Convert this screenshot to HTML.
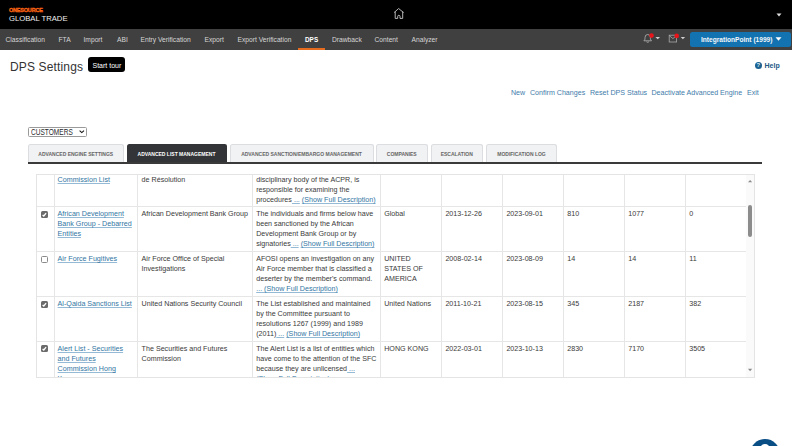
<!DOCTYPE html>
<html><head><meta charset="utf-8">
<style>
*{margin:0;padding:0;box-sizing:border-box}
html,body{width:792px;height:446px;overflow:hidden;background:#fff;font-family:"Liberation Sans",sans-serif;position:relative}
.a{position:absolute;white-space:nowrap}
#hdr{position:absolute;left:0;top:0;width:792px;height:29px;background:#000}
#nav{position:absolute;left:0;top:29px;width:792px;height:21px;background:#404040}
.nv{position:absolute;top:36px;font-size:6.7px;line-height:8px;color:#d6d6d6;white-space:nowrap}
.lk{position:absolute;top:88.7px;font-size:7.1px;line-height:9px;color:#3f7cab;white-space:nowrap}
.tab{position:absolute;top:144px;height:18.2px;background:#f1f2f4;border:1px solid #dcdde0;border-bottom:none;border-radius:2.5px 2.5px 0 0;font-weight:bold;font-size:5px;color:#666;text-align:center;line-height:18.2px;white-space:nowrap}
#tbl{position:absolute;left:36px;top:175px;width:718px;height:202px;overflow:hidden;background:#fff}
#tblb{position:absolute;left:35.5px;top:174px;width:719.5px;height:203.5px;border:1px solid #e4e4e4}
.vl{position:absolute;top:0;width:1px;height:210px;background:#e6e6e6}
.hl{position:absolute;left:0;height:1px;width:710px;background:#e6e6e6}
.c{position:absolute;font-size:7.15px;line-height:10px;color:#3a3a3a;white-space:nowrap;margin-top:0.7px}
.c a{color:#3276a3;text-decoration:underline;text-decoration-thickness:1px;text-underline-offset:0.6px;text-decoration-skip-ink:none;text-decoration-color:rgba(60,130,180,0.55)}
.cb{position:absolute;width:7px;height:7px;border-radius:1.5px}
.cb.on{background:#6b6b6b}
.cb svg{position:absolute;left:0;top:0}
.cb.off{border:0.8px solid #8a8a8a;background:#fff}
</style></head><body>
<div id="hdr"></div>
<div class="a" style="left:9px;top:6.5px;font-size:5.5px;font-weight:bold;color:#fa6414;letter-spacing:-0.2px;-webkit-text-stroke:0.35px #fa6414">ONESOURCE</div>
<div class="a" style="left:9px;top:13.5px;font-size:7.7px;color:#f0f0f0">GLOBAL TRADE</div>
<svg class="a" style="left:392px;top:7px" width="13" height="13" viewBox="0 0 13 13"><path d="M2.1 5.6 L6.6 1.5 L11.6 5.6 M3.2 4.6 V11.4 H5.7 V9.4 Q5.7 8.3 6.85 8.3 Q8 8.3 8 9.4 V11.4 H10.7 V4.6" fill="none" stroke="#c8c8c8" stroke-width="0.9" stroke-linejoin="round"/></svg>
<svg class="a" style="left:776px;top:13px" width="6" height="4" viewBox="0 0 6 4"><path d="M0.5 0.5 H5.5 L3 3.5Z" fill="#ddd"/></svg>

<div id="nav"></div>
<div class="nv" style="left:5.5px">Classification</div>
<div class="nv" style="left:58.5px">FTA</div>
<div class="nv" style="left:83.5px">Import</div>
<div class="nv" style="left:117px">ABI</div>
<div class="nv" style="left:140.5px">Entry Verification</div>
<div class="nv" style="left:204.5px">Export</div>
<div class="nv" style="left:237.5px">Export Verification</div>
<div class="nv" style="left:305px;color:#fff;font-weight:bold;font-size:6.4px">DPS</div>
<div class="a" style="left:298px;top:47.7px;width:27px;height:2.3px;background:#e56b1f"></div>
<div class="nv" style="left:332px">Drawback</div>
<div class="nv" style="left:374.5px">Content</div>
<div class="nv" style="left:411.5px">Analyzer</div>

<svg class="a" style="left:642px;top:33px" width="20" height="11" viewBox="0 0 20 11"><path d="M1.9 7.8 Q3 7 3 5.4 L3 4.6 Q3 1.5 5.7 1.5 Q8.4 1.5 8.4 4.6 L8.4 5.4 Q8.4 7 9.5 7.8 Z M4.5 8.8 Q5.7 9.9 6.9 8.8" fill="none" stroke="#b0b0b0" stroke-width="0.85"/><circle cx="9.5" cy="2.6" r="2.3" fill="#e8141a"/><path d="M13.4 3.9 H18 L15.7 6.2Z" fill="#cfcfcf"/></svg>
<svg class="a" style="left:667px;top:33px" width="20" height="11" viewBox="0 0 20 11"><rect x="2.2" y="2.2" width="7.4" height="6.8" fill="none" stroke="#a8a8a8" stroke-width="0.8"/><path d="M2.2 2.6 L5.9 5.6 L9.6 2.6" fill="none" stroke="#a8a8a8" stroke-width="0.8"/><circle cx="9.7" cy="2.9" r="2.3" fill="#e8141a"/><path d="M13.7 3.9 H18.1 L15.9 6.2Z" fill="#cfcfcf"/></svg>
<div class="a" style="left:689.5px;top:32.3px;width:101.5px;height:14.8px;background:#1372b0;border-radius:2.5px"></div>
<div class="a" style="left:701px;top:35.7px;font-size:6.6px;line-height:8px;font-weight:bold;color:#f4f8fb">IntegrationPoint (1999)</div>
<svg class="a" style="left:775px;top:37px" width="7" height="4" viewBox="0 0 7 4"><path d="M0.5 0.3 H6.5 L3.5 3.8Z" fill="#fff"/></svg>

<div class="a" style="left:10px;top:59px;font-size:12px;line-height:16px;color:#333;letter-spacing:0.15px">DPS Settings</div>
<div class="a" style="left:88px;top:57.3px;width:37px;height:15.2px;background:#000;border-radius:3px"></div>
<div class="a" style="left:92.5px;top:61.7px;font-size:7px;line-height:8px;color:#fff">Start tour</div>

<div class="a" style="left:754.8px;top:62.2px;width:7.2px;height:7.2px;border-radius:50%;background:#1a6090;color:#dfeef8;font-size:6px;line-height:7.2px;font-weight:bold;text-align:center">?</div>
<div class="a" style="left:764.5px;top:61.5px;font-size:7px;line-height:8px;font-weight:bold;color:#235a85">Help</div>

<div class="lk" style="left:511px">New</div>
<div class="lk" style="left:530px">Confirm Changes</div>
<div class="lk" style="left:590px">Reset DPS Status</div>
<div class="lk" style="left:651.5px">Deactivate Advanced Engine</div>
<div class="lk" style="left:747px">Exit</div>

<div class="a" style="left:28.3px;top:126.8px;width:58.6px;height:10px;border:1px solid #9a9a9a;border-radius:1.5px;background:#fff"></div>
<svg class="a" style="left:78px;top:129px" width="8" height="6" viewBox="0 0 8 6"><path d="M1.6 1.7 L3.8 3.6 L6 1.7" fill="none" stroke="#111" stroke-width="1.1"/></svg>
<div class="a" style="left:30.6px;top:127.6px;font-size:8.8px;line-height:9px;color:#2a2a2a;transform:scaleX(0.745);transform-origin:0 0">CUSTOMERS</div>

<div class="tab" style="left:28px;width:95.5px">ADVANCED ENGINE SETTINGS</div>
<div class="tab" style="left:126.5px;width:100px;background:#333437;border-color:#333437;color:#fff">ADVANCED LIST MANAGEMENT</div>
<div class="tab" style="left:229.5px;width:144px">ADVANCED SANCTION/EMBARGO MANAGEMENT</div>
<div class="tab" style="left:376px;width:51.5px">COMPANIES</div>
<div class="tab" style="left:430.5px;width:52.5px">ESCALATION</div>
<div class="tab" style="left:486px;width:71px">MODIFICATION LOG</div>
<div class="a" style="left:28px;top:162px;width:734px;height:2px;background:#3a3a3a"></div>

<div id="tbl">
<div class="vl" style="left:17.50px"></div>
<div class="vl" style="left:101.00px"></div>
<div class="vl" style="left:215.50px"></div>
<div class="vl" style="left:344.00px"></div>
<div class="vl" style="left:404.50px"></div>
<div class="vl" style="left:466.00px"></div>
<div class="vl" style="left:527.00px"></div>
<div class="vl" style="left:588.00px"></div>
<div class="vl" style="left:649.00px"></div>
<div class="hl" style="top:31.00px"></div>
<div class="hl" style="top:76.00px"></div>
<div class="hl" style="top:121.00px"></div>
<div class="hl" style="top:166.00px"></div>
<div class="c" style="left:21.60px;top:-1.00px"><a>Commission List</a></div>
<div class="c" style="left:105.60px;top:-1.00px">de Résolution</div>
<div class="c" style="left:220.20px;top:-1.00px">disciplinary body of the ACPR, is<br>responsible for examining the<br>procedures<a>&nbsp;...</a> <a>(Show Full Description)</a></div>
<div class="cb on" style="left:5.40px;top:35.90px"><svg width="7" height="7" viewBox="0 0 7 7"><path d="M1.6 3.9 L2.8 5 L5.1 2.2" fill="none" stroke="#fff" stroke-width="1.3"/></svg></div>
<div class="c" style="left:21.60px;top:33.70px"><a>African Development<br>Bank Group - Debarred<br>Entities</a></div>
<div class="c" style="left:105.60px;top:33.70px">African Development Bank Group</div>
<div class="c" style="left:220.20px;top:33.70px">The individuals and firms below have<br>been sanctioned by the African<br>Development Bank Group or by<br>signatories<a>&nbsp;...</a> <a>(Show Full Description)</a></div>
<div class="c" style="left:348.20px;top:33.70px">Global</div>
<div class="c" style="left:409.40px;top:33.70px">2013-12-26</div>
<div class="c" style="left:470.40px;top:33.70px">2023-09-01</div>
<div class="c" style="left:531.20px;top:33.70px">810</div>
<div class="c" style="left:592.20px;top:33.70px">1077</div>
<div class="c" style="left:653.20px;top:33.70px">0</div>
<div class="cb off" style="left:5.40px;top:80.50px"></div>
<div class="c" style="left:21.60px;top:78.30px"><a>Air Force Fugitives</a></div>
<div class="c" style="left:105.60px;top:78.30px">Air Force Office of Special<br>Investigations</div>
<div class="c" style="left:220.20px;top:78.30px">AFOSI opens an investigation on any<br>Air Force member that is classified a<br>deserter by the member's command.<br><a>... (Show Full Description)</a></div>
<div class="c" style="left:348.20px;top:78.30px">UNITED<br>STATES OF<br>AMERICA</div>
<div class="c" style="left:409.40px;top:78.30px">2008-02-14</div>
<div class="c" style="left:470.40px;top:78.30px">2023-08-09</div>
<div class="c" style="left:531.20px;top:78.30px">14</div>
<div class="c" style="left:592.20px;top:78.30px">14</div>
<div class="c" style="left:653.20px;top:78.30px">11</div>
<div class="cb on" style="left:5.40px;top:126.00px"><svg width="7" height="7" viewBox="0 0 7 7"><path d="M1.6 3.9 L2.8 5 L5.1 2.2" fill="none" stroke="#fff" stroke-width="1.3"/></svg></div>
<div class="c" style="left:21.60px;top:123.80px"><a>Al-Qaida Sanctions List</a></div>
<div class="c" style="left:105.60px;top:123.80px">United Nations Security Council</div>
<div class="c" style="left:220.20px;top:123.80px">The List established and maintained<br>by the Committee pursuant to<br>resolutions 1267 (1999) and 1989<br>(2011)<a>&nbsp;...</a> <a>(Show Full Description)</a></div>
<div class="c" style="left:348.20px;top:123.80px">United Nations</div>
<div class="c" style="left:409.40px;top:123.80px">2011-10-21</div>
<div class="c" style="left:470.40px;top:123.80px">2023-08-15</div>
<div class="c" style="left:531.20px;top:123.80px">345</div>
<div class="c" style="left:592.20px;top:123.80px">2187</div>
<div class="c" style="left:653.20px;top:123.80px">382</div>
<div class="cb on" style="left:5.40px;top:170.10px"><svg width="7" height="7" viewBox="0 0 7 7"><path d="M1.6 3.9 L2.8 5 L5.1 2.2" fill="none" stroke="#fff" stroke-width="1.3"/></svg></div>
<div class="c" style="left:21.60px;top:167.90px"><a>Alert List - Securities<br>and Futures<br>Commission Hong<br>Kong</a></div>
<div class="c" style="left:105.60px;top:167.90px">The Securities and Futures<br>Commission</div>
<div class="c" style="left:220.20px;top:167.90px">The Alert List is a list of entities which<br>have come to the attention of the SFC<br>because they are unlicensed<a>&nbsp;...</a><br><a>(Show Full Description)</a></div>
<div class="c" style="left:348.20px;top:167.90px">HONG KONG</div>
<div class="c" style="left:409.40px;top:167.90px">2022-03-01</div>
<div class="c" style="left:470.40px;top:167.90px">2023-10-13</div>
<div class="c" style="left:531.20px;top:167.90px">2830</div>
<div class="c" style="left:592.20px;top:167.90px">7170</div>
<div class="c" style="left:653.20px;top:167.90px">3505</div>
</div><!--tblend-->
<div id="tblb"></div>
<div class="a" style="left:746px;top:175px;width:8px;height:202px;background:#fafafa"></div>
<svg class="a" style="left:746px;top:178px" width="8" height="6" viewBox="0 0 8 6"><path d="M2 4.2 H6.2 L4.1 2Z" fill="#8a8a8a"/></svg>
<div class="a" style="left:747.8px;top:205px;width:4.4px;height:32px;background:#8c8c8c;border-radius:2.2px"></div>
<svg class="a" style="left:746px;top:367px" width="8" height="6" viewBox="0 0 8 6"><path d="M2 1.8 H6.2 L4.1 4.2Z" fill="#8a8a8a"/></svg>
<div class="a" style="left:749.5px;top:438.8px;width:30px;height:30px;border-radius:50%;background:#0a4e86"></div>
<div class="a" style="left:760px;top:443.5px;width:10px;height:10px;border-radius:50%;border:2.2px solid #fff"></div>


</body></html>
